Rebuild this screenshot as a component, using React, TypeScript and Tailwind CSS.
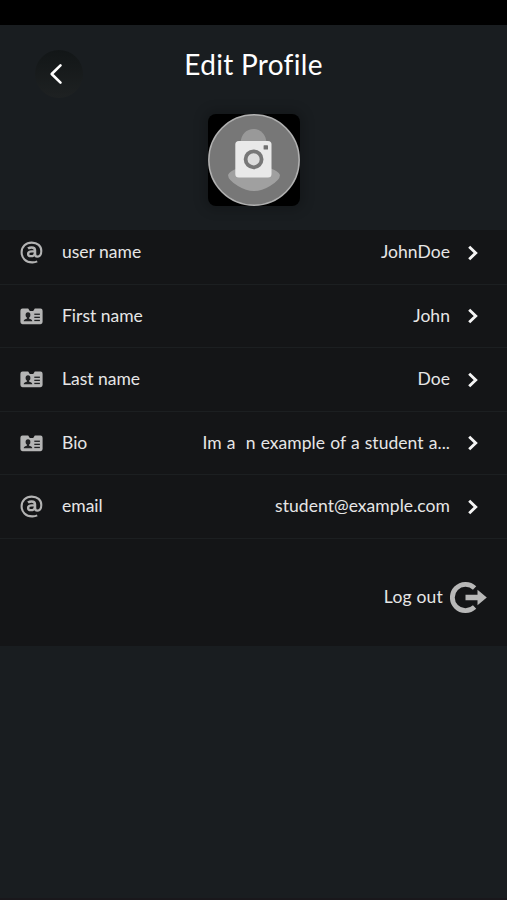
import React from 'react';

type IconName = 'at' | 'card';

interface ProfileField {
    label: string;
    value: string;
    icon: IconName;
}

const fields: ProfileField[] = [
    { label: 'user name', value: 'JohnDoe', icon: 'at' },
    { label: 'First name', value: 'John', icon: 'card' },
    { label: 'Last name', value: 'Doe', icon: 'card' },
    { label: 'Bio', value: 'Im a  n example of a student a...', icon: 'card' },
    { label: 'email', value: 'student@example.com', icon: 'at' },
];

const AtIcon: React.FC = () => (
    <svg width="23" height="23" viewBox="0 0 23 23" fill="none" stroke="#b3b3b3">
        <path d="M17.2 20.4C15.6 21.2 13.8 21.5 12 21.4C5.8 21.2 1.6 17 1.6 11.3C1.6 5.6 5.9 1.6 11.7 1.6C17.5 1.6 21.3 5 21.3 9.9C21.3 13.5 19.5 15.6 17.2 15.6C15.8 15.6 15.2 14.8 15.2 13.4" strokeWidth="2.1" />
        <path d="M8 7.6C9 6.8 10.4 6.4 11.7 6.4C13.9 6.4 15 7.4 15 9.4V14.8" strokeWidth="2.5" />
        <path d="M15 10.4H12C9.6 10.4 8.1 11.4 8.1 13C8.1 14.4 9.1 15.2 10.7 15.2C12.9 15.2 14.8 13.9 15 12" strokeWidth="2.3" />
    </svg>
);

const CardIcon: React.FC = () => (
    <svg width="23" height="17" viewBox="0 0 23 17">
        <path d="M2.5 .6H8.2L9.8 3.1H13.2L14.8 .6H20.5Q22.6 .6 22.6 2.7V14.1Q22.6 16.2 20.5 16.2H2.5Q.4 16.2 .4 14.1V2.7Q.4 .6 2.5 .6Z" fill="#b5b5b5" />
        <g fill="#202123">
            <ellipse cx="8" cy="7.1" rx="2.4" ry="2.8" />
            <path d="M7 8.5H9V10.6L11.2 11.4Q12.3 11.9 12.3 13.2H3.7Q3.7 11.9 4.8 11.4L7 10.6Z" />
            <rect x="14.3" y="5.6" width="5.6" height="1.3" />
            <rect x="14.3" y="8.7" width="5.6" height="1.3" />
            <rect x="14.3" y="11.8" width="5.6" height="1.3" />
        </g>
    </svg>
);

const FieldRow: React.FC<{ field: ProfileField }> = ({ field }) => (
    <div className="flex h-[63.5px] shrink-0 items-center border-b border-[#1c1f21] pl-5 pr-7 text-[17.5px] leading-6 text-[#e6e6e6]">
        <div className="flex w-[42px] items-center pt-px">
            {field.icon === 'at' ? <AtIcon /> : <CardIcon />}
        </div>
        <span>{field.label}</span>
        <span className="flex-1 whitespace-pre text-right tracking-[0.05px] [word-spacing:0.55px]">{field.value}</span>
        <svg className="ml-[17px] mt-px" width="12" height="16" viewBox="0 0 12 16" fill="none" stroke="#f5f5f5" strokeWidth="2.9">
            <path d="M2.2 1.8L8.7 8L2.2 14.2" />
        </svg>
    </div>
);

const Avatar: React.FC = () => (
    <div className="h-[92px] w-[92px] rounded-lg bg-black shadow-[0_0_12px_4px_rgba(0,0,0,0.2)]">
        <svg width="92" height="92" viewBox="0 0 92 92">
            <circle cx="46" cy="46" r="45.2" fill="#777777" stroke="#b0b0b0" strokeWidth="1.5" />
            <path d="M32.5 30C32.5 10 58.5 10 58.5 30V45H32.5Z" fill="#999999" />
            <path d="M20 61Q24 53 46 52Q68 53 72 61Q72 66 62 72Q46 82 30 72Q20 66 20 61Z" fill="#a0a0a0" />
            <rect x="27.3" y="27" width="36.2" height="36.4" rx="3.5" fill="#e9e9e9" />
            <circle cx="45.6" cy="45.3" r="8" fill="#dddddd" stroke="#777777" strokeWidth="3.8" />
            <rect x="55.6" y="31.2" width="4.4" height="4.4" rx=".6" fill="#707070" />
        </svg>
    </div>
);

const App: React.FC = () => {
    return (
        <div className="flex h-[900px] w-full flex-col overflow-hidden bg-[#191d20] font-[Lato,sans-serif] text-white">
            <div className="h-[25px] shrink-0 bg-black" />
            <header className="grid h-[205px] shrink-0 grid-cols-[85px_1fr_85px]">
                <button className="ml-[35px] mt-[25px] flex h-12 w-12 items-center justify-center rounded-full bg-linear-to-b from-[#121617] to-[#1e2122]">
                    <svg className="mr-[7px]" width="14" height="22" viewBox="0 0 14 22" fill="none" stroke="#ffffff" strokeWidth="2.6" strokeLinecap="round" strokeLinejoin="round">
                        <path d="M11.5 2.3L2.7 11L11.5 19.7" />
                    </svg>
                </button>
                <div className="flex flex-col items-center">
                    <h1 className="mt-[21px] text-[28px] leading-9 tracking-[0.3px]">Edit Profile</h1>
                    <div className="mt-8">
                        <Avatar />
                    </div>
                </div>
            </header>
            <main className="flex h-[416px] shrink-0 flex-col bg-[#141517]">
                {/* first row starts scrolled under the header */}
                <div className="flex h-[308.5px] shrink-0 flex-col justify-end overflow-hidden">
                    {fields.map((field) => (
                        <FieldRow key={field.label} field={field} />
                    ))}
                </div>
                <button className="mt-10 flex h-9 items-center justify-end pr-5">
                    <span className="text-[17.5px] leading-6 tracking-[0.2px] text-[#e6e6e6]">Log out</span>
                    <svg className="ml-[7px] mt-0.5" width="37" height="33" viewBox="0 0 37 33">
                        <path d="M24.6 6.9A13.2 13.2 0 1 0 24.6 26.1" fill="none" stroke="#b8b8b8" strokeWidth="4.8" />
                        <path d="M15.5 13.8H27.5V8.8L36.8 16.5L27.5 24.2V19.2H15.5Z" fill="#b8b8b8" />
                    </svg>
                </button>
            </main>
            <div className="flex-1 border-b-2 border-[#19171b]" />
        </div>
    );
};

export default App;
